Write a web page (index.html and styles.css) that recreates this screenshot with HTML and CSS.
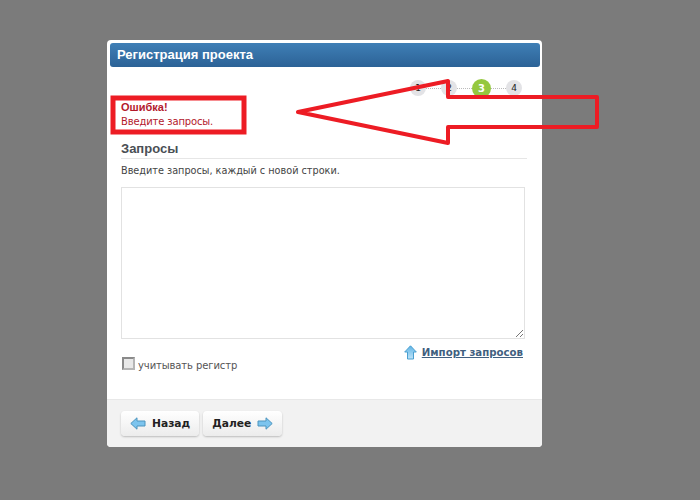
FILE: index.html
```html
<!DOCTYPE html>
<html lang="ru">
<head>
<meta charset="utf-8">
<title>Регистрация проекта</title>
<link rel="stylesheet" href="styles.css">
</head>
<body>
<div class="dialog">
  <div class="title">Регистрация проекта</div>
  <div class="content">
    <div class="steps">
      <span class="step">1</span><span class="dots"></span>
      <span class="step">2</span><span class="dots"></span>
      <span class="step active">3</span><span class="dots"></span>
      <span class="step">4</span>
    </div>
    <div class="error">
      <strong class="error-head">Ошибка!</strong>
      <div class="error-text">Введите запросы.</div>
    </div>
    <h2 class="section">Запросы</h2>
    <p class="hint">Введите запросы, каждый с новой строки.</p>
    <div class="area">
      <svg class="grip" width="9" height="9" viewBox="0 0 9 9"><path d="M1 8L8 1M5 8L8 5" stroke="#777" fill="none"/></svg>
    </div>
    <div class="options">
      <label class="check"><span class="box"></span>учитывать регистр</label>
      <a class="import" href="#">
        <svg width="13" height="15" viewBox="0 0 13 15"><defs><linearGradient id="up" x1="0" y1="0" x2="0" y2="1"><stop offset="0" stop-color="#5fb4e6"/><stop offset="1" stop-color="#bfe4f8"/></linearGradient></defs><path d="M6.5 .8L12.3 7H9.5V14H3.5V7H.7Z" fill="url(#up)" stroke="#4a9fd0"/></svg>
        <span class="import-text">Импорт запросов</span>
      </a>
    </div>
  </div>
  <div class="footer">
    <button class="btn" type="button">
      <svg width="16" height="13" viewBox="0 0 16 13"><path d="M.8 6.5L7 .8V4H15V9H7V12.2Z" fill="#7cc4ee" stroke="#4c94bd"/></svg>
      Назад
    </button>
    <button class="btn" type="button">
      Далее
      <svg width="16" height="13" viewBox="0 0 16 13"><path d="M15.2 6.5L9 .8V4H1V9H9V12.2Z" fill="#7cc4ee" stroke="#4c94bd"/></svg>
    </button>
  </div>
</div>
<svg class="annotation" width="700" height="500" viewBox="0 0 700 500">
  <path class="arrow" d="M298 112L448 81V97H597V127H448V143Z"/>
  <rect class="frame" x="113" y="98" width="131" height="34"/>
</svg>
</body>
</html>
```
FILE: styles.css
```css
* { box-sizing: border-box; }
html, body { margin: 0; height: 100%; }
body {
  background: #7b7b7b;
  padding: 40px 0 0 107px;
  font-family: "Liberation Sans", Arial, sans-serif;
  overflow: hidden;
}
.dialog {
  width: 435px;
  height: 407px;
  background: #fff;
  border-radius: 4px;
  padding-top: 3px;
  display: flex;
  flex-direction: column;
}
.title {
  margin: 0 2px 0 3px;
  height: 24px;
  border-radius: 3px;
  background: linear-gradient(#3f7fb6, #2c6296);
  color: #fff;
  font: bold 13px/24px "Liberation Sans", sans-serif;
  padding-left: 7px;
}
.content {
  flex: 1;
  padding: 0 15px 0 14px;
  display: flex;
  flex-direction: column;
}
.steps {
  display: flex;
  justify-content: flex-end;
  align-items: center;
  height: 18px;
  margin-top: 12px;
  padding-right: 5px;
}
.step {
  width: 16px;
  height: 16px;
  border-radius: 50%;
  background: #e3e3e6;
  color: #222;
  font: 9px/16px "DejaVu Sans", sans-serif;
  text-align: center;
  flex: none;
}
.step.active {
  width: 19px;
  height: 19px;
  background: #95c83f;
  color: #fff;
  font: bold 10px/19px "DejaVu Sans", sans-serif;
}
.dots {
  width: 15px;
  border-top: 1px dotted #bbb;
}
.error {
  margin-top: 1px;
  color: #b3192b;
  font: 10px/14px "DejaVu Sans", sans-serif;
  letter-spacing: -.15px;
  height: 30px;
  padding-top: 2px;
}
.error-head {
  font: bold 11px/14px "Liberation Sans", sans-serif;
  letter-spacing: 0;
}
.section {
  margin: 13px 0 0;
  font: bold 13px/15px "Liberation Sans", sans-serif;
  color: #4a4f55;
  border-bottom: 1px solid #e6e6e6;
  height: 18px;
}
.hint {
  margin: 5px 0 0;
  font: 9.7px/14px "DejaVu Sans", sans-serif;
  color: #444;
}
.area {
  margin-top: 9px;
  width: 404px;
  height: 152px;
  border: 1px solid #e2e2e2;
  position: relative;
}
.grip { position: absolute; right: 0; bottom: 0; }
.options {
  display: flex;
  justify-content: space-between;
  align-items: flex-start;
  margin-top: 6px;
}
.check {
  display: flex;
  align-items: flex-start;
  gap: 3px;
  margin: 12px 0 0 1px;
  font: 10px/18px "DejaVu Sans", sans-serif;
  letter-spacing: -.1px;
  color: #555;
}
.box {
  width: 13px;
  height: 13px;
  border: 2px solid;
  border-color: #8a8a8a #b5b5b5 #b5b5b5 #8a8a8a;
  background: #e8e8e8;
}
.import {
  display: flex;
  align-items: center;
  gap: 5px;
  margin-right: 4px;
  color: #3f5f80;
  font: bold 10.2px/14px "DejaVu Sans", sans-serif;
}
.footer {
  height: 48px;
  background: #f2f2f2;
  border-top: 1px solid #e8e8e8;
  border-radius: 0 0 4px 4px;
  padding: 11px 0 0 14px;
  display: flex;
  gap: 4px;
  align-items: flex-start;
}
.btn {
  height: 25px;
  padding: 0 9px;
  display: flex;
  align-items: center;
  gap: 6px;
  border: 0;
  border-radius: 4px;
  background: linear-gradient(#fff, #ececec);
  box-shadow: 0 1px 2px #bbb;
  color: #222;
  font: bold 10.7px/25px "DejaVu Sans", sans-serif;
}
.annotation {
  position: absolute;
  left: 0;
  top: 0;
  pointer-events: none;
}
.arrow {
  fill: none;
  stroke: #ed1c24;
  stroke-width: 4;
  stroke-linejoin: round;
}
.frame {
  fill: none;
  stroke: #ed1c24;
  stroke-width: 5;
}
```
